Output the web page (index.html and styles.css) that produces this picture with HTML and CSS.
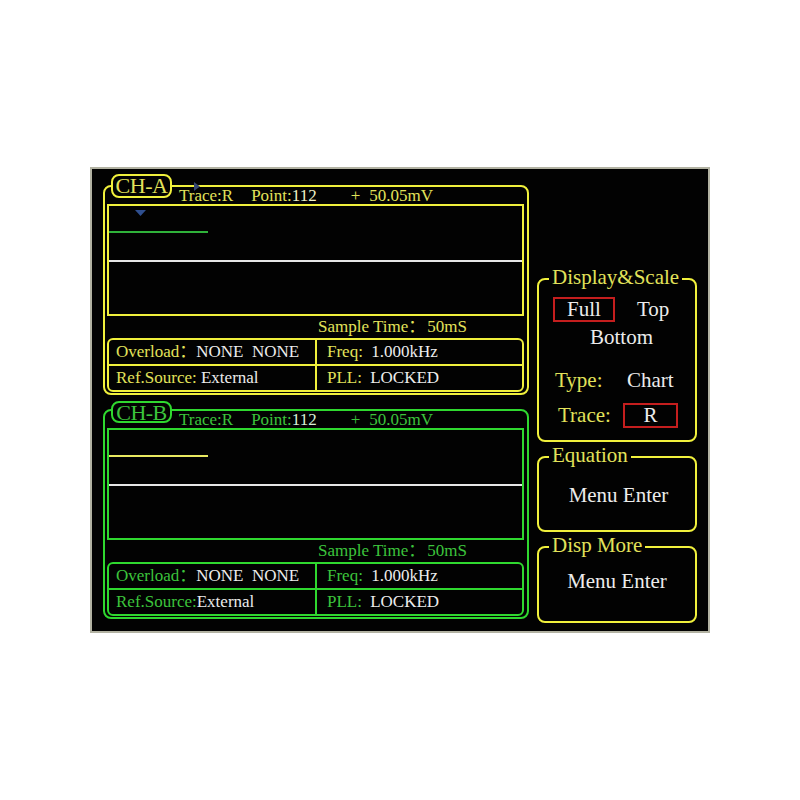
FILE: index.html
```html
<!DOCTYPE html>
<html>
<head>
<meta charset="utf-8">
<title>Lock-in Display</title>
<link rel="stylesheet" href="styles.css">
</head>
<body>
<div class="screen">
  <div class="channels">
    <section class="channel ch-a">
      <div class="ch-label">CH-A</div>
      <svg class="cursor-mark" width="6" height="9" viewBox="0 0 6 9"><polygon points="0,0 6,4.5 0,9" fill="#33456e"/></svg>
      <div class="ch-head">
        <span class="h-trace">Trace:R</span>
        <span class="h-point">Point:<span class="num">112</span></span>
        <span class="h-sign">+</span>
        <span class="h-value">50.05mV</span>
      </div>
      <div class="graph">
        <svg class="marker" width="11" height="6" viewBox="0 0 11 6"><polygon points="0,0 11,0 5.5,6" fill="#2f4f8f"/></svg>
        <div class="trace-ref"></div>
        <div class="trace-zero"></div>
      </div>
      <div class="sample">Sample Time：<span class="val sample-val">50mS</span></div>
      <div class="info">
        <div class="cell">Overload：<span class="val">NONE&nbsp;&nbsp;NONE</span></div>
        <div class="cell cell-right">Freq: <span class="val gap">1.000kHz</span></div>
        <div class="cell cell-low">Ref.Source: <span class="val">External</span></div>
        <div class="cell cell-right cell-low">PLL: <span class="val gap">LOCKED</span></div>
      </div>
    </section>

    <section class="channel ch-b">
      <div class="ch-label">CH-B</div>
      <div class="ch-head">
        <span class="h-trace">Trace:R</span>
        <span class="h-point">Point:<span class="num">112</span></span>
        <span class="h-sign">+</span>
        <span class="h-value">50.05mV</span>
      </div>
      <div class="graph">
        <div class="trace-ref"></div>
        <div class="trace-zero"></div>
      </div>
      <div class="sample">Sample Time：<span class="val sample-val">50mS</span></div>
      <div class="info">
        <div class="cell">Overload：<span class="val">NONE&nbsp;&nbsp;NONE</span></div>
        <div class="cell cell-right">Freq: <span class="val gap">1.000kHz</span></div>
        <div class="cell cell-low">Ref.Source:<span class="val">External</span></div>
        <div class="cell cell-right cell-low">PLL: <span class="val gap">LOCKED</span></div>
      </div>
    </section>
  </div>

  <div class="menus">
    <div class="menu menu-display">
      <div class="menu-title">Display&amp;Scale</div>
      <div class="row row-scale">
        <span class="sel sel-full">Full</span>
        <span class="opt opt-top">Top</span>
      </div>
      <div class="row row-bottom"><span class="opt">Bottom</span></div>
      <div class="row row-type">
        <span class="lbl lbl-type">Type:</span>
        <span class="opt">Chart</span>
      </div>
      <div class="row row-trace">
        <span class="lbl lbl-trace">Trace:</span>
        <span class="sel sel-r">R</span>
      </div>
    </div>
    <div class="menu menu-eq">
      <div class="menu-title">Equation</div>
      <div class="menu-enter enter-eq">Menu Enter</div>
    </div>
    <div class="menu menu-more">
      <div class="menu-title">Disp More</div>
      <div class="menu-enter enter-more">Menu Enter</div>
    </div>
  </div>
</div>
</body>
</html>
```

FILE: styles.css
```css
html, body {
  margin: 0;
  padding: 0;
  background: #ffffff;
}

body {
  font-family: "Liberation Serif", "Noto Sans CJK SC", serif;
}

.screen {
  box-sizing: border-box;
  width: 620px;
  height: 466px;
  margin: 167px 0 0 90px;
  border: 2px solid #b2b2a2;
  background: #020202;
  display: flex;
  align-items: flex-start;
  padding: 16px 0 0 11px;
}

.channels {
  width: 426px;
  display: flex;
  flex-direction: column;
  gap: 14px;
}

.channel {
  position: relative;
  box-sizing: border-box;
  height: 210px;
  border: 2px solid var(--line);
  border-radius: 8px;
  padding: 0 3px 0 2px;
  color: var(--text);
  font-size: 17px;
}

.ch-a {
  --line: #f0f03c;
  --text: #e2e25a;
  --num: #f0f0c8;
  --ref: #2fb23a;
}

.ch-b {
  --line: #2fd82f;
  --text: #3cc43c;
  --num: #d8f0d8;
  --ref: #e8e860;
}

.ch-label {
  position: absolute;
  left: 6px;
  top: -13px;
  box-sizing: border-box;
  width: 61px;
  height: 24px;
  border: 2px solid var(--line);
  border-radius: 8px;
  background: #020202;
  color: var(--text);
  font-size: 22px;
  line-height: 20px;
  text-align: center;
  letter-spacing: -0.5px;
}

.ch-b .ch-label {
  top: -10px;
  height: 22px;
  line-height: 19px;
}

.cursor-mark {
  position: absolute;
  left: 89px;
  top: -5px;
}

.ch-head {
  height: 17px;
  line-height: 17px;
  padding-left: 72px;
  display: flex;
  white-space: nowrap;
}

.h-point { margin-left: 18px; }
.h-point .num { color: var(--num); }
.h-sign { margin-left: 34px; }
.h-value { margin-left: 9px; }

.graph {
  position: relative;
  box-sizing: border-box;
  height: 112px;
  border: 2px solid var(--line);
}

.marker {
  position: absolute;
  left: 26px;
  top: 4px;
}

.trace-ref {
  margin-top: 25px;
  width: 99px;
  height: 2px;
  background: var(--ref);
}

.ch-b .trace-ref {
  height: 1.5px;
}

.trace-zero {
  margin-top: 27px;
  height: 2px;
  background: #e6e6e6;
}

.sample {
  height: 22px;
  line-height: 22px;
  padding-left: 211px;
  white-space: nowrap;
}

.val {
  color: #ececec;
}

.sample-val {
  color: var(--text);
  margin-left: 2px;
}

.info {
  box-sizing: border-box;
  height: 54px;
  border: 2px solid var(--line);
  border-radius: 6px;
  display: grid;
  grid-template-columns: 206px 1fr;
  grid-template-rows: 24px 26px;
}

.cell {
  box-sizing: border-box;
  padding-left: 7px;
  line-height: 24px;
  white-space: nowrap;
}

.cell-right {
  border-left: 2px solid var(--line);
  padding-left: 10px;
}

.cell-low {
  border-top: 2px solid var(--line);
}

.gap {
  margin-left: 4px;
}

/* Right-hand menus */
.menus {
  width: 160px;
  margin: 93px 0 0 8px;
  display: flex;
  flex-direction: column;
  gap: 14px;
  font-size: 21px;
  color: #ececec;
}

.menu {
  box-sizing: border-box;
  border: 2px solid #f0f03c;
  border-radius: 8px;
  display: flex;
  flex-direction: column;
}

.menu-display { height: 164px; }
.menu-eq { height: 76px; }
.menu-more { height: 77px; }

.menu-title {
  align-self: flex-start;
  height: 22px;
  line-height: 22px;
  margin: -14px 0 0 10px;
  padding: 0 3px;
  background: #020202;
  color: #e2e25a;
  white-space: nowrap;
}

.row {
  display: flex;
  align-items: center;
  white-space: nowrap;
}

.row-scale {
  margin: 9px 0 0 14px;
  height: 25px;
}

.sel {
  box-sizing: border-box;
  height: 25px;
  border: 2px solid #c41e1e;
  line-height: 21px;
  text-align: center;
}

.sel-full { width: 62px; }
.opt-top { margin-left: 22px; }

.row-bottom {
  margin: 3px 0 0 51px;
  height: 24px;
  line-height: 24px;
}

.row-type {
  margin: 19px 0 0 16px;
  height: 24px;
  line-height: 24px;
}

.lbl {
  color: #e2e25a;
}

.lbl-type { width: 72px; }

.row-trace {
  margin: 11px 0 0 19px;
  height: 25px;
}

.lbl-trace { width: 65px; }
.sel-r { width: 55px; }

.menu-enter {
  height: 24px;
  line-height: 24px;
  text-align: center;
  white-space: nowrap;
}

.enter-eq {
  margin-top: 17px;
  padding-left: 3px;
}

.enter-more {
  margin-top: 13px;
}
```
